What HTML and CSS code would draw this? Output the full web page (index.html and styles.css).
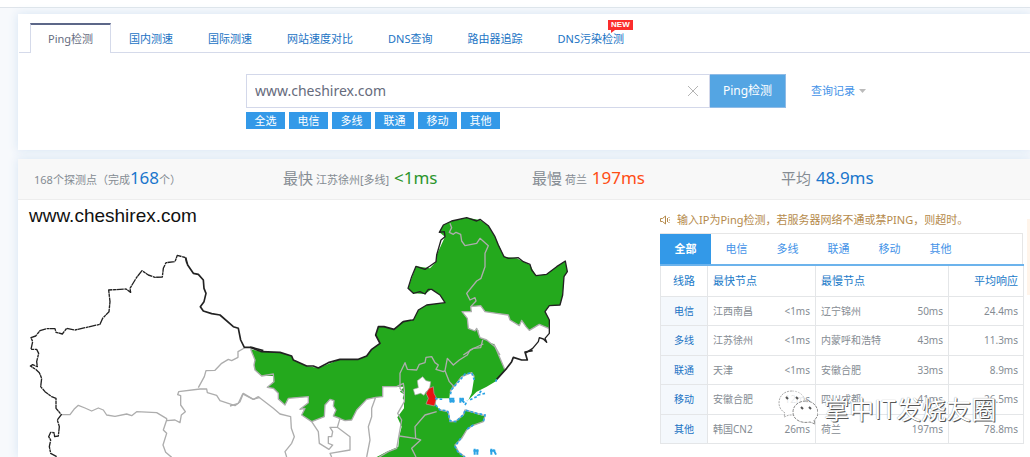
FILE: index.html
```html
<!DOCTYPE html>
<html lang="zh-CN">
<head>
<meta charset="utf-8">
<title>Ping检测</title>
<link rel="stylesheet" href="styles.css">
</head>
<body>
<div class="topbar"></div>
<main class="page">
  <section class="panel">
    <nav class="tabs">
      <a class="tab tab-active" href="#">Ping检测</a>
      <a class="tab" href="#">国内测速</a>
      <a class="tab" href="#">国际测速</a>
      <a class="tab" href="#">网站速度对比</a>
      <a class="tab" href="#">DNS查询</a>
      <a class="tab" href="#">路由器追踪</a>
      <a class="tab" href="#">DNS污染检测<span class="new">NEW</span></a>
    </nav>
    <form class="search">
      <div class="search-row">
        <div class="field">
          <input class="host" type="text" aria-label="域名" value="www.cheshirex.com">
          <button class="clear" type="button" aria-label="清除"><svg width="12" height="12" viewBox="0 0 12 12"><path d="M1 1 11 11M11 1 1 11" fill="none" stroke="#b4b4b4"/></svg></button>
        </div>
        <button class="go" type="button">Ping检测</button>
        <a class="history" href="#">查询记录<svg width="7" height="4" viewBox="0 0 7 4"><path d="M0 0H7L3.500 4Z" fill="#bbb"/></svg></a>
      </div>
      <div class="chips">
        <button class="chip" type="button">全选</button>
        <button class="chip" type="button">电信</button>
        <button class="chip" type="button">多线</button>
        <button class="chip" type="button">联通</button>
        <button class="chip" type="button">移动</button>
        <button class="chip" type="button">其他</button>
      </div>
    </form>
  </section>

  <section class="panel">
    <div class="stats">
      <div class="stat">168个探测点（完成<b class="num blue">168</b>个）</div>
      <div class="stat"><span class="cap">最快</span> 江苏徐州[多线] <b class="num green">&lt;1ms</b></div>
      <div class="stat"><span class="cap">最慢</span> 荷兰 <b class="num red">197ms</b></div>
      <div class="stat"><span class="cap">平均</span> <b class="num blue">48.9ms</b></div>
    </div>
    <div class="result">
      <svg class="map" width="622" height="257" viewBox="18 200 622 257" role="img" aria-label="中国地图">
        <g fill="#24a91d">
          <path transform="translate(230 320) scale(.33333)" d="M62 88 95 95 150 97 185 108 190 120 230 138 265 144 330 118 385 118 410 108 425 88 450 70 437 45 445 20 492 28 520 5 545 0H600V170H520V190L500 200H458V230L437 232 410 238 380 270 365 300 345 302 310 288 318 270 310 258 312 242 300 238 285 255 283 290 245 305 215 285 225 265 210 268 235 248 235 230 175 235 165 255 145 237 145 220 130 205 112 202 130 185 130 168 95 168 75 150 72 135 75 120Z"/>
          <path transform="translate(380 205) scale(.33333)" d="M0 363 45 373 65 350 100 345 115 315 140 300 195 293 180 270 155 253 135 267 100 265 84 250 108 184 150 190 168 170 170 150 195 95 178 82 190 60 215 48 260 38 300 45 325 62 345 95 372 155 410 160 450 180 468 212 500 208 530 185 556 168 562 200 552 215 548 270 540 300 508 302 495 320 508 345 506 370 478 358 448 376 438 365 425 346 418 362 390 345 385 330 350 325 315 320 302 302 272 305 274 320 246 320 262 340 265 370 285 378 290 370 300 398 320 405 345 425 360 450H0Z"/>
          <path transform="translate(390 330) scale(.33333)" d="M0 0H265V20L285 35 312 42 345 120 315 155 290 170 260 185 235 210 245 190 253 140 245 128 215 140 180 185 178 205 135 205 137 225 150 240 175 245 180 275 195 275 220 255 225 240 270 255 285 257 280 275 245 288 230 300 215 325 195 345 205 365 225 381H-40L-10 365 25 350 28 318 35 290 22 262 42 235 42 210 38 205 42 193 30 185 42 170H0Z"/>
        </g>
        <path transform="translate(390 330) scale(.33333)" d="M98 140 108 152 122 155 118 180 108 185 102 196 92 190 75 195 70 178 85 173 82 152Z" fill="#fff" stroke="#aaa" stroke-width="2"/>
        <path transform="translate(390 330) scale(.33333)" d="M117 175 130 170 132 190 140 205 133 228 108 222 115 205 108 190Z" fill="#e91313" stroke="#aaa" stroke-width="2"/>
        <g fill="none" stroke="#adadad" stroke-width="4" stroke-linejoin="round">
          <path transform="translate(20 240) scale(.33333)" d="M122 524H150L162 508 175 496 195 504 215 513 235 504 250 510 260 525 285 529 320 522 335 527 350 515 410 518 440 536 440 542 465 540 480 548 484 525 496 515 482 495 482 467 473 464 476 455 540 447 560 447 562 458 590 466 600 482 645 497 660 485 670 460 700 478 720 472M440 540 430 570 440 580 429 615 437 637 455 652M535 443 553 410 558 392 585 391 605 370 625 358 635 362 654 352 654 335 673 324"/>
          <path transform="translate(230 320) scale(.33333)" d="M0 258 25 250 38 222 70 238 85 230 130 265 150 282 182 290 184 325 193 350 185 370 165 395 170 411M245 305 265 335 268 370 297 388 308 375 295 370V350H305L308 335 300 322H322L360 350V390L300 400 305 411M310 288 330 295 322 322M437 232 425 265 425 290 415 320 420 360 410 411M62 88 75 120 72 135 75 150 95 168 130 162 132 185 112 202 130 205 145 220 145 237 165 255 175 235 235 230 235 248 210 268 225 265 215 285 245 305 283 290 285 255 300 238 312 242 310 258 318 270 310 288 345 302 365 300 380 270 410 238 437 232 458 230V200H500L520 190 523 210V245L503 280 515 300 507 345 500 385 475 395 448 411"/>
          <path transform="translate(380 205) scale(.33333)" d="M210 55 215 68 208 82 220 88 228 82 242 88 245 108 255 122 290 115 300 100 325 122 315 145V185L303 220 290 228 260 265 270 285 285 278 288 288 272 305M506 370 478 358 448 376 438 365 425 346 418 362 390 345 385 330 350 325 315 320 302 302 272 305 274 320 246 320 262 340 265 370 285 378 290 370 300 398 320 405 345 425 360 450M308 405 302 428 280 430 250 450"/>
          <path transform="translate(390 330) scale(.33333)" d="M42 190 30 175V130L45 98 52 118 80 120 88 103 105 98 108 82 125 80 135 98 145 105 138 118 160 125 165 122 178 155 190 168 180 185M165 122 172 85 190 105 208 90 232 75 240 60 280 42M140 245 105 255 75 290 77 325 92 330 65 355 78 381M28 318 75 325M312 42 345 120M253 140 245 128 215 140 180 185M150 240 175 245 180 275 195 275 220 255 225 240 285 257 280 275 245 288 230 300 215 325 195 345 205 365 225 381"/>
        </g>
        <g fill="none" stroke="#222" stroke-width="5" stroke-linejoin="round">
          <path transform="translate(20 240) scale(.33333)" stroke-width="4" stroke-dasharray="22 2 9 1" d="M110 650 92 640 88 620 92 600 86 590 92 577 102 578 104 590 115 588 118 560 112 540 124 524 108 505V475L95 470 75 455 62 440 65 415 58 398 47 388 31 378 38 374 52 380 50 365 56 340 50 328H33L38 305 33 293 47 288 60 272 80 266 105 266 108 277 127 282 140 265 165 270 200 262 240 253 248 235 267 215 270 185 266 150 318 147 332 157 330 145 350 112 366 92 385 105 405 112 427 111 430 85 438 68 465 65 472 46 497 53 500 70"/>
          <path transform="translate(20 240) scale(.33333)" d="M497 53 503 75 520 100 535 103 550 120 552 145 558 160 552 185 541 200 550 213 575 221 600 225 640 260 655 265 662 300 673 322 695 322 730 332"/>
          <path transform="translate(230 320) scale(.33333)" d="M60 82 95 95 150 97 185 108 190 120 230 138 250 138 265 144 295 128 330 118 385 118 410 108 425 88 450 70 437 45 445 20 462 20 492 28 520 5 545 0"/>
          <path transform="translate(380 205) scale(.33333)" stroke-width="4" d="M95 345 100 345 115 315 140 300 195 293 180 270 155 253 145 253 135 267 120 260 100 265 84 250 95 215 108 184 135 193 150 183 168 170 170 150 183 105 195 95 193 80 178 82 190 60 215 48 260 38 290 48 300 43 325 62 345 95 355 120 372 155 385 160 415 158 430 170 450 178 455 195 468 212 500 208 530 185 556 168 562 200 552 215 548 270 540 300 508 302 495 320 508 345 508 385 495 400 500 412 490 402 478 398 475 410 458 430 435 445"/>
          <path transform="translate(390 330) scale(.33333)" d="M428 62 405 66 412 90 395 90 370 82 365 95 350 115 320 148"/>
        </g>
        <g fill="none" stroke="#2ba3e4" stroke-width="5" stroke-dasharray="8 6">
          <path transform="translate(390 330) scale(.33333)" d="M320 148 315 160M285 190 265 195 275 180M260 200 235 212M253 150 245 128 225 132 212 148 185 178 180 198M135 205 145 207 160 208M137 225 150 240 172 242 180 272 198 275 222 252 225 240 260 250 285 255 280 275M250 285 230 298M212 325 195 350 205 368 225 381M225 225 232 212"/>
        </g>
        <g fill="none" stroke="#2ba3e4" stroke-width="6">
          <path transform="translate(390 330) scale(.33333)" d="M177 206H193M178 213H194M182 205V218M190 205V218M208 208H222M211 203V218M215 210 223 218M218 203V213M250 362H266M254 356V374M262 358V374M300 362H316M304 356V374M310 358 318 374"/>
        </g>
        <text class="map-title" x="29" y="222">www.cheshirex.com</text>
      </svg>
      <aside class="side">
        <p class="tip"><svg width="11" height="10" viewBox="0 0 11 10"><path d="M.5 3.500H2.500L5.500 1V9L2.500 6.500H.5ZM7.500 3V7M9.500 2 8.500 3M9.500 8 8.500 7M9 5H10" fill="none" stroke="#b58a4b"/></svg>输入IP为Ping检测，若服务器网络不通或禁PING，则超时。</p>
        <div class="filters">
          <button class="filter filter-on" type="button">全部</button>
          <button class="filter" type="button">电信</button>
          <button class="filter" type="button">多线</button>
          <button class="filter" type="button">联通</button>
          <button class="filter" type="button">移动</button>
          <button class="filter" type="button">其他</button>
        </div>
        <table class="lines">
          <colgroup><col class="c-line"><col class="c-name"><col class="c-ms"><col class="c-slow"><col class="c-ms"><col class="c-avg"></colgroup>
          <thead>
            <tr><th scope="col" class="line-h">线路</th><th scope="colgroup" colspan="2">最快节点</th><th scope="colgroup" colspan="2">最慢节点</th><th scope="col" class="avg-h">平均响应</th></tr>
          </thead>
          <tbody>
            <tr><th scope="row">电信</th><td>江西南昌</td><td class="ms">&lt;1ms</td><td>辽宁锦州</td><td class="ms">50ms</td><td class="ms">24.4ms</td></tr>
            <tr><th scope="row">多线</th><td>江苏徐州</td><td class="ms">&lt;1ms</td><td>内蒙呼和浩特</td><td class="ms">43ms</td><td class="ms">11.3ms</td></tr>
            <tr><th scope="row">联通</th><td>天津</td><td class="ms">&lt;1ms</td><td>安徽合肥</td><td class="ms">33ms</td><td class="ms">8.9ms</td></tr>
            <tr><th scope="row">移动</th><td>安徽合肥</td><td class="ms">12ms</td><td>四川成都</td><td class="ms">41ms</td><td class="ms">26.5ms</td></tr>
            <tr><th scope="row">其他</th><td>韩国CN2</td><td class="ms">26ms</td><td>荷兰</td><td class="ms">197ms</td><td class="ms">78.8ms</td></tr>
          </tbody>
        </table>
        <div class="watermark">
          <svg width="40" height="36" viewBox="0 0 40 36">
            <path d="M14 1C6 1 1 6 1 13C1 18 4 21 7 23L6 27L11 25C13 25 15 25 17 25" fill="#fff" fill-opacity=".8" stroke="#aaa" stroke-dasharray="2 1"/>
            <path d="M14 1C21 1 26 5 27 11L16 24" fill="#fff" fill-opacity=".8"/>
            <path d="M14 1C21 1 26 5 27 11" fill="none" stroke="#ccc" stroke-dasharray="2 1"/>
            <path d="M28 11C20 11 15 16 15 22C15 29 22 34 32 32L37 34L36 30C39 28 40 25 40 22C39 15 34 11 28 11Z" fill="#fff" fill-opacity=".9" stroke="#888" stroke-dasharray="3 1"/>
            <path d="M8 7 10 9M18 7 20 9M23 17 25 19M31 17 33 19" stroke="#555" stroke-width="2"/>
          </svg>
          <span>掌中IT发烧友圈</span>
        </div>
      </aside>
    </div>
    <span class="edge-glow"></span>
  </section>
</main>
</body>
</html>
```
FILE: styles.css
```css
* { box-sizing: border-box; }

body {
  margin: 0;
  background: #f7f9fc;
  color: #858c93;
  font: 11px/16px "Noto Sans", "Noto Sans CJK SC", sans-serif;
  overflow-x: hidden;
}

button, input { font: inherit; margin: 0; padding: 0; border: 0; }
a { text-decoration: none; }

.topbar {
  height: 8px;
  background: #fff;
  border-bottom: 1px solid #dfe4ea;
}

.page {
  display: flex;
  flex-direction: column;
  gap: 9px;
  padding: 6px 0 0 18px;
}

.panel {
  position: relative;
  background: #fff;
  box-shadow: 0 0 9px 1px #dbe8f5;
}

.tabs {
  display: flex;
  gap: 1px;
  margin-left: 1px;
  padding: 9px 0 0 11px;
  border-bottom: 1px solid #d5daea;
}

.tab {
  position: relative;
  padding: 0 17px;
  border: 1px solid transparent;
  border-width: 2px 0 0;
  color: #1a73c4;
  line-height: 27px;
  white-space: nowrap;
}

.tab-active {
  margin-bottom: -1px;
  border-width: 2px 1px 0;
  border-color: #5c6788 #d5daea;
  background: #fff;
  color: #666c80;
}

.new {
  position: absolute;
  top: -5px;
  right: 8px;
  width: 25px;
  height: 10px;
  background: #fb2d2d;
  color: #fff;
  font: bold 8px/10px "Liberation Sans", sans-serif;
  text-align: center;
}

.new::after {
  content: "";
  position: absolute;
  left: 3px;
  top: 10px;
  border-top: 3px solid #fb2d2d;
  border-right: 4px solid transparent;
}

.search { padding: 21px 0 21px 228px; }
.search-row { display: flex; align-items: center; }

.field {
  display: flex;
  width: 464px;
  height: 34px;
  border: 1px solid #d3d8ea;
  background: #fff;
}

.host {
  flex: 1;
  min-width: 0;
  padding-left: 8px;
  background: none;
  color: #666b7c;
  font-size: 14px;
}

.clear { width: 33px; background: none; line-height: 0; }

.go {
  width: 76px;
  height: 34px;
  border: 1px solid #8fbbe6;
  border-left: 0;
  background: #54a5e3;
  color: #fff;
  font-size: 12px;
}

.history {
  display: flex;
  align-items: center;
  gap: 4px;
  margin-left: 25px;
  color: #4493e8;
}

.chips { display: flex; gap: 4px; padding-top: 4px; }
.chip { width: 39px; height: 17px; background: #3399e8; color: #fff; line-height: 17px; }

.stats {
  display: grid;
  grid-template-columns: repeat(4, 1fr);
  height: 41px;
  padding-left: 16px;
  border-bottom: 1px solid #ededed;
  background: #f8f8f8;
}

.stat { line-height: 38px; white-space: nowrap; }
.cap { font-size: 15px; }
.num { font-size: 17px; font-weight: 400; }
.cap ~ .num { margin-left: 2px; }
.blue { color: #1a76cc; }
.green { color: #2c952c; }
.red { color: #ff4d14; }

.result { display: flex; justify-content: space-between; }
.map { display: block; flex: none; }
.map-title { font: 19px "Liberation Sans", sans-serif; fill: #111; }

.side { position: relative; width: 363px; margin-right: 7px; }

.tip {
  display: flex;
  align-items: center;
  gap: 6px;
  margin: 0;
  padding: 12px 0 5px;
  color: #b58a4b;
  white-space: nowrap;
}

.filters {
  display: flex;
  height: 31px;
  border: 1px solid #e6e6e6;
  border-width: 1px 1px 0 0;
}

.filter { width: 51px; background: none; color: #4493e8; }
.filter-on { background: #3399e8; color: #fff; font-weight: 700; }

.lines {
  width: 100%;
  height: 180px;
  border-collapse: collapse;
  border: 1px solid #e4e6e8;
  border-top: 2px solid #6cb3ec;
  table-layout: fixed;
  font-size: 10px;
}

.c-line { width: 47px; }
.c-name { width: 65px; }
.c-ms { width: 43px; }
.c-slow { width: 90px; }
.c-avg { width: 75px; }

.lines th, .lines td {
  padding: 0 5px;
  border-bottom: 1px solid #e4e6e8;
  text-align: left;
  font-weight: 400;
  white-space: nowrap;
}

.lines thead th {
  height: 31px;
  border-right: 1px solid #e4e6e8;
  color: #1a7ac8;
  font-size: 11px;
}

.lines thead .line-h { text-align: center; }
.lines thead .avg-h { text-align: right; }

.lines tbody th {
  border-right: 1px solid #e4e6e8;
  background: #f4f8fc;
  color: #1a73c4;
  text-align: center;
}

.lines .ms { padding-left: 0; border-right: 1px solid #e4e6e8; text-align: right; }

.watermark {
  position: absolute;
  left: 118px;
  bottom: 31px;
  display: flex;
  align-items: center;
  gap: 6px;
  color: #fff;
  font: 25px/36px "Noto Sans CJK SC", sans-serif;
  text-shadow: 1px 1px 0 #555, 0 0 1px #888;
  white-space: nowrap;
}

.edge-glow {
  position: absolute;
  top: 60px;
  right: 0;
  width: 3px;
  height: 76px;
  background: #fff4ea;
}
```
